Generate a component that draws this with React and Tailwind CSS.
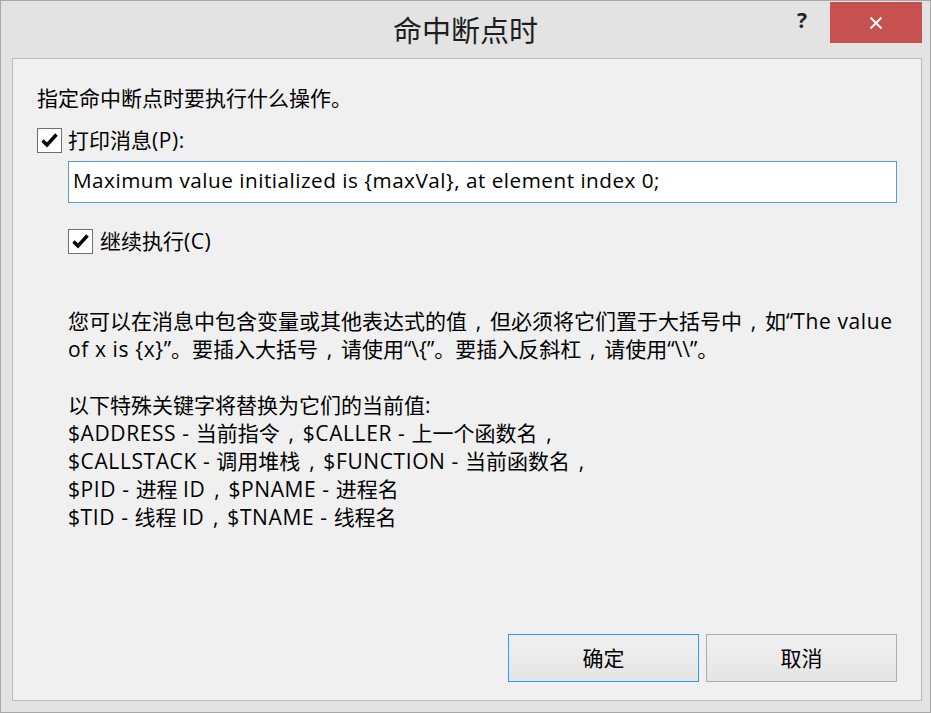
import React from 'react'

const font = { fontFamily: '"Open Sans", "Noto Sans CJK SC", sans-serif' }

// full-width comma, drawn centred in its cell like the original
function Comma() {
	return <span className="inline-block w-[23px] text-center leading-none">,</span>
}

// latin runs are a touch wider in the original
function L({ children }) {
	return <span className="tracking-[0.6px]">{children}</span>
}

function CheckBox({ checked }) {
	return (
		<span className="w-[25px] h-[25px] border border-[#707070] bg-white flex items-center justify-center shrink-0">
			{checked && (
				<svg width="19" height="19" viewBox="0 0 19 19">
					<path d="M2.5 9.5 L7 14 L16.5 3.5" fill="none" stroke="#000" strokeWidth="3.4" />
				</svg>
			)}
		</span>
	)
}

function App() {
	return (
		<div className="w-[931px] h-[713px] bg-white">
			<div className="w-[931px] h-[713px] border border-[#a8a8a8] bg-[#e3e3e3] flex flex-col text-black" style={font}>
				{/* title bar */}
				<div className="h-[57px] grid grid-cols-[1fr_auto_1fr]">
					<div></div>
					<div className="text-[29px] text-[#1e1e1e] pt-[10px] leading-[40px]">命中断点时</div>
					<div className="flex justify-end items-start pr-[8px] pt-[1px]">
						<div className="w-[40px] h-[41px] mr-[8px] flex items-center justify-center text-[21px] font-bold text-[#222] pb-[4px]">?</div>
						<div className="w-[92px] h-[41px] bg-[#c75050] flex items-center justify-center">
							<svg width="14" height="14" viewBox="0 0 14 14">
								<path d="M1.5 1.5 L12.5 12.5 M12.5 1.5 L1.5 12.5" stroke="#fff" strokeWidth="1.8" />
							</svg>
						</div>
					</div>
				</div>

				{/* client area */}
				<div className="flex-1 ml-[11px] mr-[8px] mb-[11px] border border-[#bcbcbc] bg-[#f0f0f0] flex flex-col pl-[24px] pr-[24px] pt-[25px] pb-[18px] text-[21px] leading-[28px]">
					<p>指定命中断点时要执行什么操作。</p>

					<label className="mt-[14px] h-[28px] flex items-center gap-[6px]">
						<CheckBox checked />
						<span>打印消息<L>(P):</L></span>
					</label>

					<div className="mt-[7px] ml-[31px] h-[42px] border border-[#569de5] bg-white flex items-center pl-[4px] pb-[4px] text-[20.7px] tracking-[0.5px]">
						Maximum value initialized is {'{maxVal}'}, at element index 0;
					</div>

					<label className="mt-[24px] ml-[31px] h-[28px] flex items-center gap-[7px]">
						<CheckBox checked />
						<span>继续执行<L>(C)</L></span>
					</label>

					<p className="mt-[52px] ml-[31px] whitespace-nowrap">
						您可以在消息中包含变量或其他表达式的值<Comma />但必须将它们置于大括号中<Comma />如“<L>The value</L>
						<br />
						<L>of x is {'{x}'}</L>”。要插入大括号<Comma />请使用“\{'{'}”。要插入反斜杠<Comma />请使用“\\”。
					</p>

					<div className="mt-[28px] ml-[31px]">
						<p>以下特殊关键字将替换为它们的当前值:</p>
						<p><L>$ADDRESS - </L>当前指令<Comma /><L>$CALLER - </L>上一个函数名<Comma /></p>
						<p><L>$CALLSTACK - </L>调用堆栈<Comma /><L>$FUNCTION - </L>当前函数名<Comma /></p>
						<p><L>$PID - </L>进程 <L>ID</L><Comma /><L>$PNAME - </L>进程名</p>
						<p><L>$TID - </L>线程 <L>ID</L><Comma /><L>$TNAME - </L>线程名</p>
					</div>

					<div className="mt-auto flex justify-end gap-[7px]">
						<button type="button" className="w-[191px] h-[48px] border border-[#3399ff] bg-gradient-to-b from-[#f0f0f0] to-[#e5e5e5] text-[21px]">确定</button>
						<button type="button" className="w-[191px] h-[48px] border border-[#adadad] bg-gradient-to-b from-[#f0f0f0] to-[#e5e5e5] text-[21px]">取消</button>
					</div>
				</div>
			</div>
		</div>
	)
}

export default App
